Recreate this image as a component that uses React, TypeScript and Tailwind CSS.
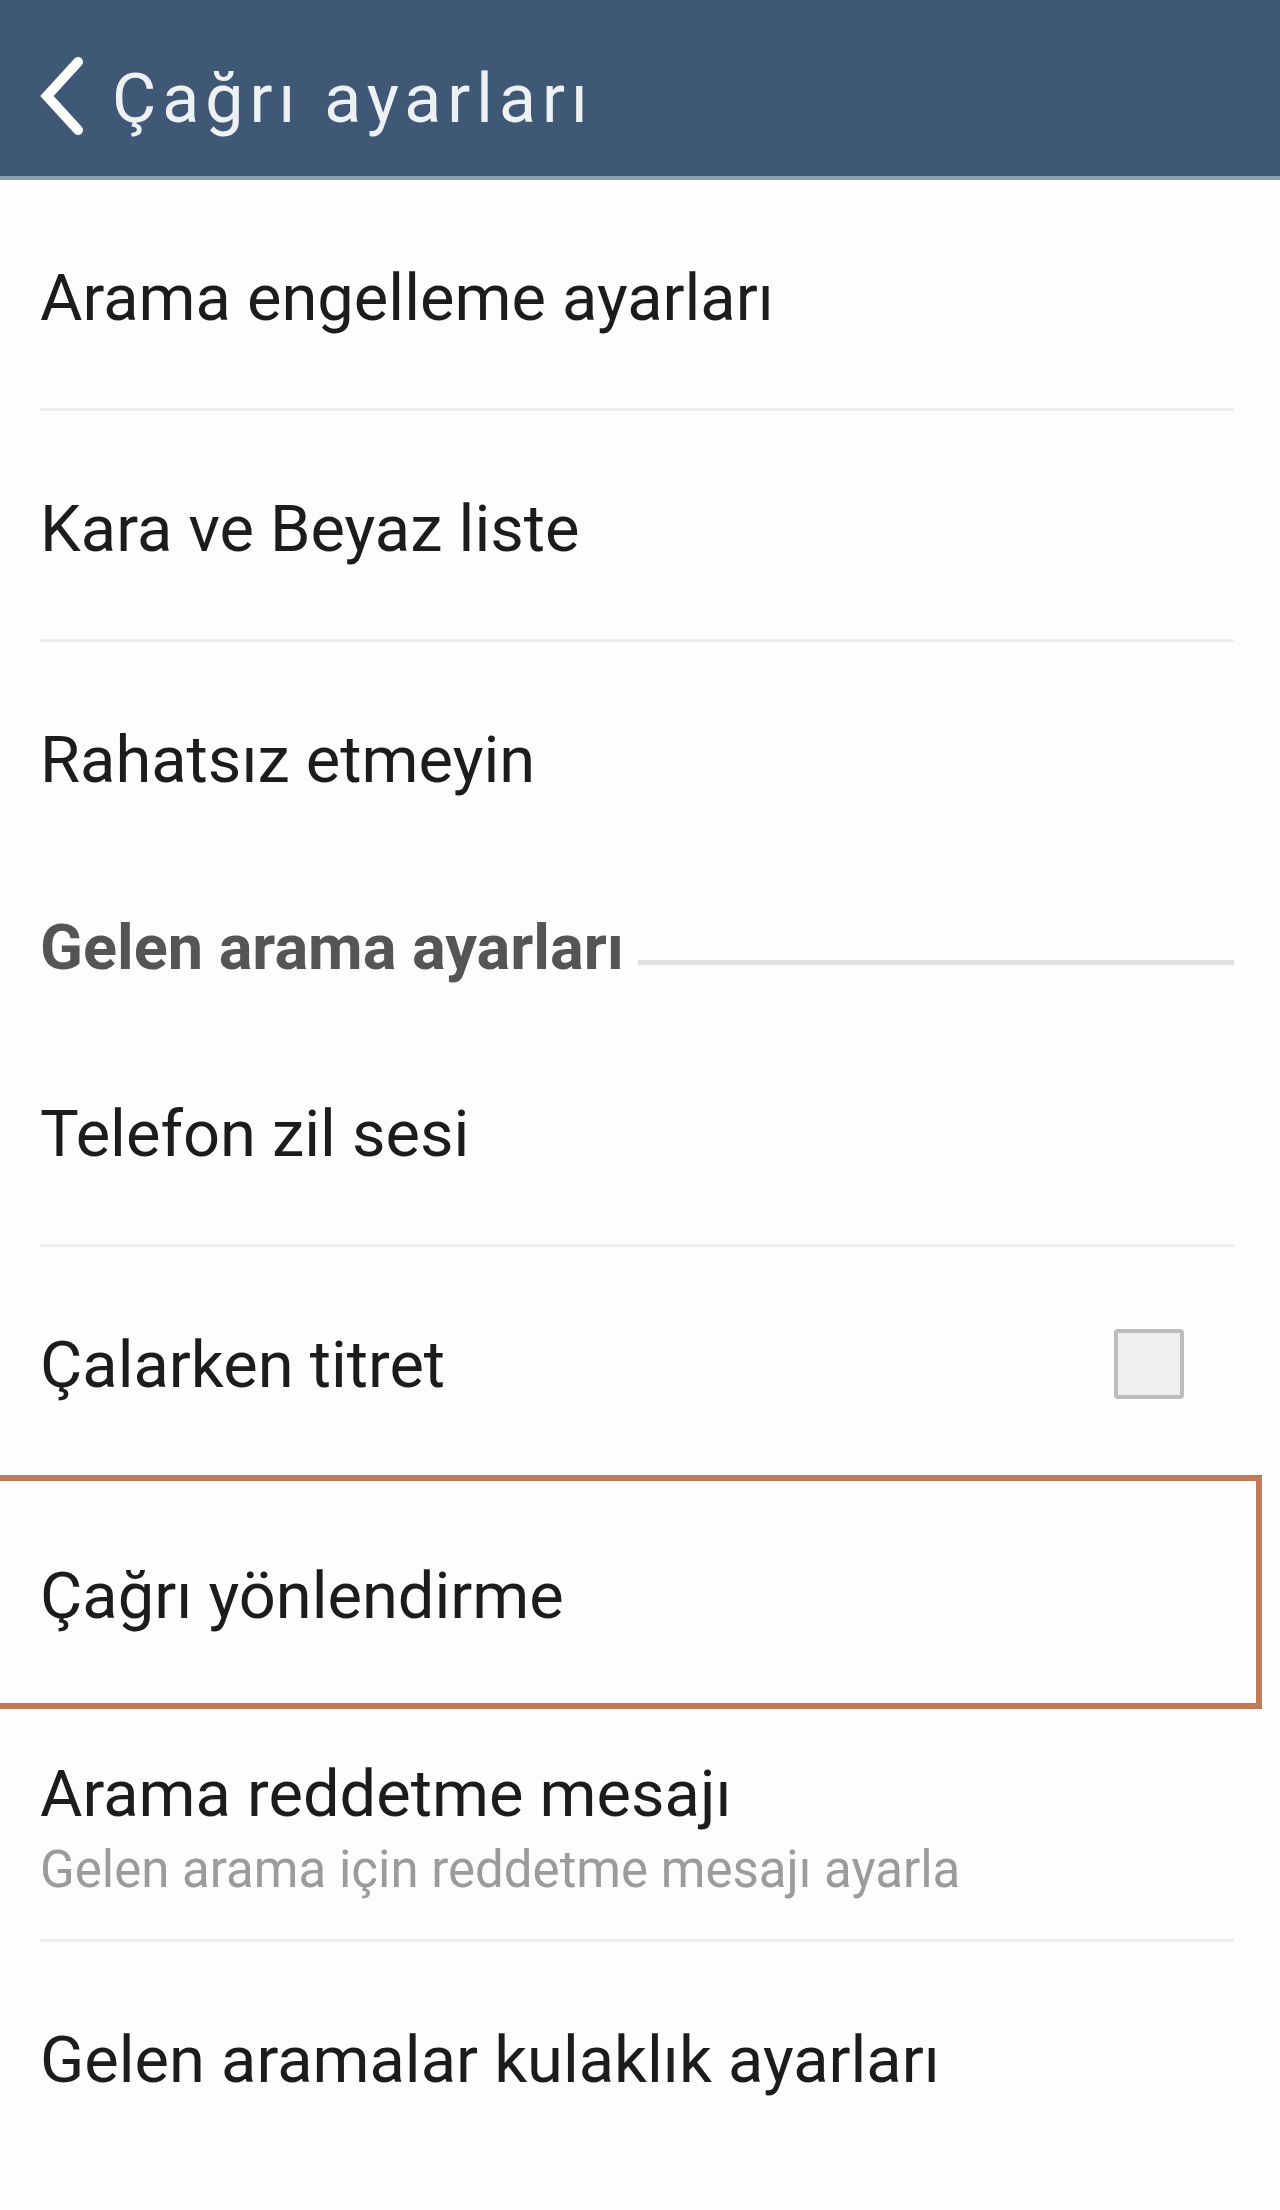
type Row = {
  title: string;
  subtitle?: string;
  checkbox?: boolean;
  highlighted?: boolean;
  divider?: boolean;
};

const font = { fontFamily: 'Roboto, "Noto Sans", sans-serif' };

function BackArrow() {
  return (
    <svg width="48" height="78" viewBox="0 0 48 78" className="shrink-0">
      <polyline
        points="40,5 9,39 40,73"
        fill="none"
        stroke="#ffffff"
        strokeWidth="10"
        strokeLinecap="round"
        strokeLinejoin="miter"
      />
    </svg>
  );
}

function SettingRow({ title, subtitle, checkbox, highlighted, divider }: Row) {
  const height = highlighted ? 'h-[222px]' : subtitle ? 'h-[230px]' : 'h-[228px]';
  const row = (
    <div className={`flex ${height} items-center justify-between pl-[40px] pr-[96px] pt-[8px]`}>
      <div className="flex flex-col">
        <span className="text-[65px] leading-[76px] text-[#1c1c1c]">{title}</span>
        {subtitle && (
          <span className="mt-[8px] text-[51px] leading-[60px] text-[#9b9b9b]">{subtitle}</span>
        )}
      </div>
      {checkbox && (
        <div className="-mt-[2px] h-[70px] w-[70px] rounded-[4px] border-[4px] border-[#bdbdbd] bg-[#f0f0ee]" />
      )}
    </div>
  );

  if (highlighted) {
    return <div className="mr-[18px] border-y-[6px] border-r-[6px] border-[#bf7b58]">{row}</div>;
  }

  return (
    <div>
      {row}
      {divider && <div className="ml-[40px] mr-[46px] h-[3px] bg-[#eeeeee]" />}
    </div>
  );
}

function SectionHeader({ label }: { label: string }) {
  return (
    <div className="flex h-[146px] items-center pl-[40px] pr-[46px] pt-[8px]">
      <span className="text-[63px] font-bold leading-none text-[#555555]">{label}</span>
      <div className="ml-[14px] mt-[30px] h-[5px] flex-1 bg-[#dfe1e1]" />
    </div>
  );
}

export default function App() {
  return (
    <div className="min-h-[2210px] w-[1280px] bg-[#fdfdfd]" style={font}>
      {/* action bar */}
      <div className="flex h-[176px] items-center bg-[#3e5875] pl-[38px] pt-[16px]">
        <BackArrow />
        <span className="ml-[26px] mt-[6px] text-[68px] leading-none tracking-[6px] text-[#eef1f4]">
          Çağrı ayarları
        </span>
      </div>
      <div className="h-[4px] bg-[#8d9db0]" />

      <SettingRow title="Arama engelleme ayarları" divider />
      <SettingRow title="Kara ve Beyaz liste" divider />
      <SettingRow title="Rahatsız etmeyin" />

      <SectionHeader label="Gelen arama ayarları" />

      <SettingRow title="Telefon zil sesi" divider />
      <SettingRow title="Çalarken titret" checkbox />
      <SettingRow title="Çağrı yönlendirme" highlighted />
      <SettingRow
        title="Arama reddetme mesajı"
        subtitle="Gelen arama için reddetme mesajı ayarla"
        divider
      />
      <SettingRow title="Gelen aramalar kulaklık ayarları" />
    </div>
  );
}
